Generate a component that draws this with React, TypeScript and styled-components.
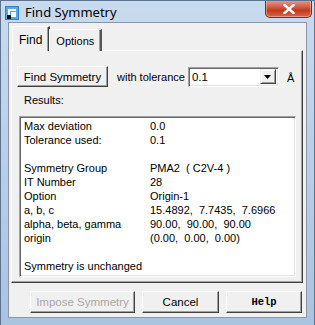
import React from "react";
import styled, { createGlobalStyle } from "styled-components";

const results = [
  { label: "Max deviation", value: "0.0" },
  { label: "Tolerance used:", value: "0.1" },
  { label: "", value: "" },
  { label: "Symmetry Group", value: "PMA2  ( C2V-4 )" },
  { label: "IT Number", value: "28" },
  { label: "Option", value: "Origin-1" },
  { label: "a, b, c", value: "15.4892,  7.7435,  7.6966" },
  { label: "alpha, beta, gamma", value: "90.00,  90.00,  90.00" },
  { label: "origin", value: "(0.00,  0.00,  0.00)" },
  { label: "", value: "" },
  { label: "Symmetry is unchanged", value: "" },
];

const App = () => {
  return (
    <>
      <GlobalStyle />
      <Window>
        <TitleBar>
          <AppIcon width="14" height="14" viewBox="0 0 14 14">
            <rect x="0" y="0" width="14" height="14" fill="#2f7fc9" />
            <rect x="1" y="1" width="12" height="12" fill="#5aa7e6" />
            <path d="M3 11V3h8v2H5v6z" fill="#ffffff" />
            <path d="M6 11V6h5v5z" fill="#ffffff" />
            <rect x="2" y="9" width="4" height="4" fill="#111" />
          </AppIcon>
          <Title>Find Symmetry</Title>
          <CloseButton>
            <svg width="12" height="10" viewBox="0 0 12 10">
              <path
                d="M1.5 1l9 8M10.5 1l-9 8"
                stroke="#fff"
                strokeWidth="2.4"
                strokeLinecap="square"
              />
            </svg>
          </CloseButton>
        </TitleBar>
        <Client>
          <TabStrip>
            <Tab active>Find</Tab>
            <Tab>Options</Tab>
          </TabStrip>
          <TabPanel>
            <ToolRow>
              <Button width={91} height={21}>
                Find Symmetry
              </Button>
              <ToolLabel>with tolerance</ToolLabel>
              <Combo>
                <ComboValue>0.1</ComboValue>
                <ComboArrow>
                  <svg width="7" height="4" viewBox="0 0 7 4">
                    <path d="M0 0h7L3.5 4z" fill="#000" />
                  </svg>
                </ComboArrow>
              </Combo>
              <Unit>Å</Unit>
            </ToolRow>
            <ResultsLabel>Results:</ResultsLabel>
            <ResultsBox>
              {results.map((row, i) => (
                <ResultRow key={i}>
                  <ResultKey>{row.label}</ResultKey>
                  <span>{row.value}</span>
                </ResultRow>
              ))}
            </ResultsBox>
          </TabPanel>
          <ButtonRow>
            <Button width={105} height={22} disabled>
              Impose Symmetry
            </Button>
            <Button width={77} height={22}>
              Cancel
            </Button>
            <Button width={76} height={22} mono>
              Help
            </Button>
          </ButtonRow>
        </Client>
      </Window>
    </>
  );
};

export default App;

const GlobalStyle = createGlobalStyle`
  body {
    margin: 0;
    font-family: "Liberation Sans", Arial, sans-serif;
    font-size: 11px;
  }
`;

const Window = styled.div`
  width: 315px;
  height: 325px;
  box-sizing: border-box;
  display: flex;
  flex-direction: column;
  border: 1px solid #5d7391;
  border-bottom: none;
  background: linear-gradient(180deg, #c9dbee 0%, #bcd1e8 40%, #aac3df 100%);
  overflow: hidden;
`;

const TitleBar = styled.div`
  height: 23px;
  display: flex;
  align-items: center;
  padding-left: 4px;
  position: relative;
`;

const AppIcon = styled.svg`
  flex: none;
  margin-top: 2px;
`;

const Title = styled.span`
  margin-left: 6px;
  margin-top: 1px;
  font-family: "Noto Sans", "Open Sans", sans-serif;
  font-size: 13px;
  color: #000;
`;

const CloseButton = styled.div`
  position: absolute;
  right: 2px;
  top: -1px;
  width: 45px;
  height: 17px;
  border: 1px solid #7a2a1e;
  border-top: none;
  border-radius: 0 0 5px 5px;
  background: linear-gradient(180deg, #e6a08c 0%, #d2553c 45%, #c1391f 60%, #d8664a 100%);
  display: flex;
  align-items: center;
  justify-content: center;
  box-shadow: inset 0 0 0 1px rgba(255, 255, 255, 0.35);
`;

const Client = styled.div`
  flex: 1;
  margin: 0 7px 7px 7px;
  background: #f0f0f0;
  border: 1px solid #8796ab;
  display: flex;
  flex-direction: column;
  padding: 3px 3px 4px 2px;
`;

const TabStrip = styled.div`
  display: flex;
  align-items: flex-end;
  height: 25px;
  padding-left: 1px;
  margin-bottom: -1px;
  position: relative;
  z-index: 1;
`;

const Tab = styled.div<{ active?: boolean }>`
  box-sizing: border-box;
  height: ${(props) => (props.active ? "25px" : "22px")};
  padding: ${(props) => (props.active ? "6px 6px 0 6px" : "5px 6px 0 6px")};
  margin-left: ${(props) => (props.active ? "0" : "-1px")};
  background: #f0f0f0;
  border-top: 1px solid #ffffff;
  border-left: 1px solid #ffffff;
  border-right: 2px solid ${(props) => (props.active ? "#404040" : "#555")};
  box-shadow: inset -1px 0 0 #a0a0a0;
  color: #000;
  font-size: ${(props) => (props.active ? "12px" : "11px")};
  white-space: nowrap;
`;

const TabPanel = styled.div`
  flex: 1;
  display: flex;
  flex-direction: column;
  background: #f0f0f0;
  border-top: 1px solid #ffffff;
  border-left: 1px solid #ffffff;
  border-right: 1px solid #404040;
  border-bottom: 1px solid #404040;
  box-shadow: inset -1px -1px 0 #a0a0a0;
  padding: 15px 6px 5px 5px;
`;

const ToolRow = styled.div`
  display: flex;
  align-items: center;
`;

const Button = styled.button<{ width: number; height: number; mono?: boolean }>`
  box-sizing: border-box;
  flex: none;
  width: ${(props) => props.width}px;
  height: ${(props) => props.height}px;
  padding: 0;
  background: #f0f0f0;
  border: 1px solid;
  border-color: #ffffff #404040 #404040 #ffffff;
  box-shadow: inset -1px -1px 0 #a0a0a0;
  font-family: ${(props) =>
    props.mono
      ? '"Liberation Mono", "DejaVu Sans Mono", monospace'
      : '"Liberation Sans", Arial, sans-serif'};
  font-size: ${(props) => (props.mono ? "10.5px" : "11.5px")};
  font-weight: ${(props) => (props.mono ? 700 : 400)};
  color: #000;
  white-space: nowrap;

  &:disabled {
    color: #a7a7a7;
  }
`;

const ToolLabel = styled.span`
  flex: none;
  margin-left: 9px;
  font-size: 11px;
  color: #000;
  white-space: nowrap;
`;

const Combo = styled.div`
  box-sizing: border-box;
  flex: none;
  margin-left: 3px;
  width: 91px;
  height: 20px;
  display: flex;
  align-items: center;
  background: #fff;
  border: 1px solid;
  border-color: #a0a0a0 #ffffff #ffffff #a0a0a0;
  box-shadow: inset 1px 1px 0 #696969, inset -1px -1px 0 #e3e3e3;
  padding: 2px 2px 2px 3px;
`;

const ComboValue = styled.span`
  flex: 1;
  font-size: 11.5px;
  color: #000;
`;

const ComboArrow = styled.div`
  box-sizing: border-box;
  width: 16px;
  height: 15px;
  display: flex;
  align-items: center;
  justify-content: center;
  background: #f0f0f0;
  border: 1px solid;
  border-color: #f0f0f0 #404040 #404040 #f0f0f0;
  box-shadow: inset 1px 1px 0 #fff, inset -1px -1px 0 #a0a0a0;
`;

const Unit = styled.span`
  flex: none;
  margin-left: 8px;
  margin-top: 2px;
  font-size: 11px;
  color: #000;
`;

const ResultsLabel = styled.div`
  margin: 7px 0 0 7px;
  height: 22px;
  font-size: 11px;
  color: #000;
`;

const ResultsBox = styled.div`
  margin-left: 2px;
  height: 161px;
  box-sizing: border-box;
  background: #fff;
  border: 1px solid;
  border-color: #a0a0a0 #ffffff #ffffff #a0a0a0;
  box-shadow: inset 1px 1px 0 #696969, inset -1px -1px 0 #e3e3e3;
  padding: 2px 4px 0 4px;
  display: flex;
  flex-direction: column;
`;

const ResultRow = styled.div`
  display: grid;
  grid-template-columns: 126px 1fr;
  height: 14px;
  line-height: 14px;
  font-size: 11px;
  color: #000;
  white-space: pre;
`;

const ResultKey = styled.span`
  white-space: nowrap;
`;

const ButtonRow = styled.div`
  display: flex;
  justify-content: flex-end;
  gap: 7px;
  padding-top: 8px;
  padding-right: 1px;
`;
